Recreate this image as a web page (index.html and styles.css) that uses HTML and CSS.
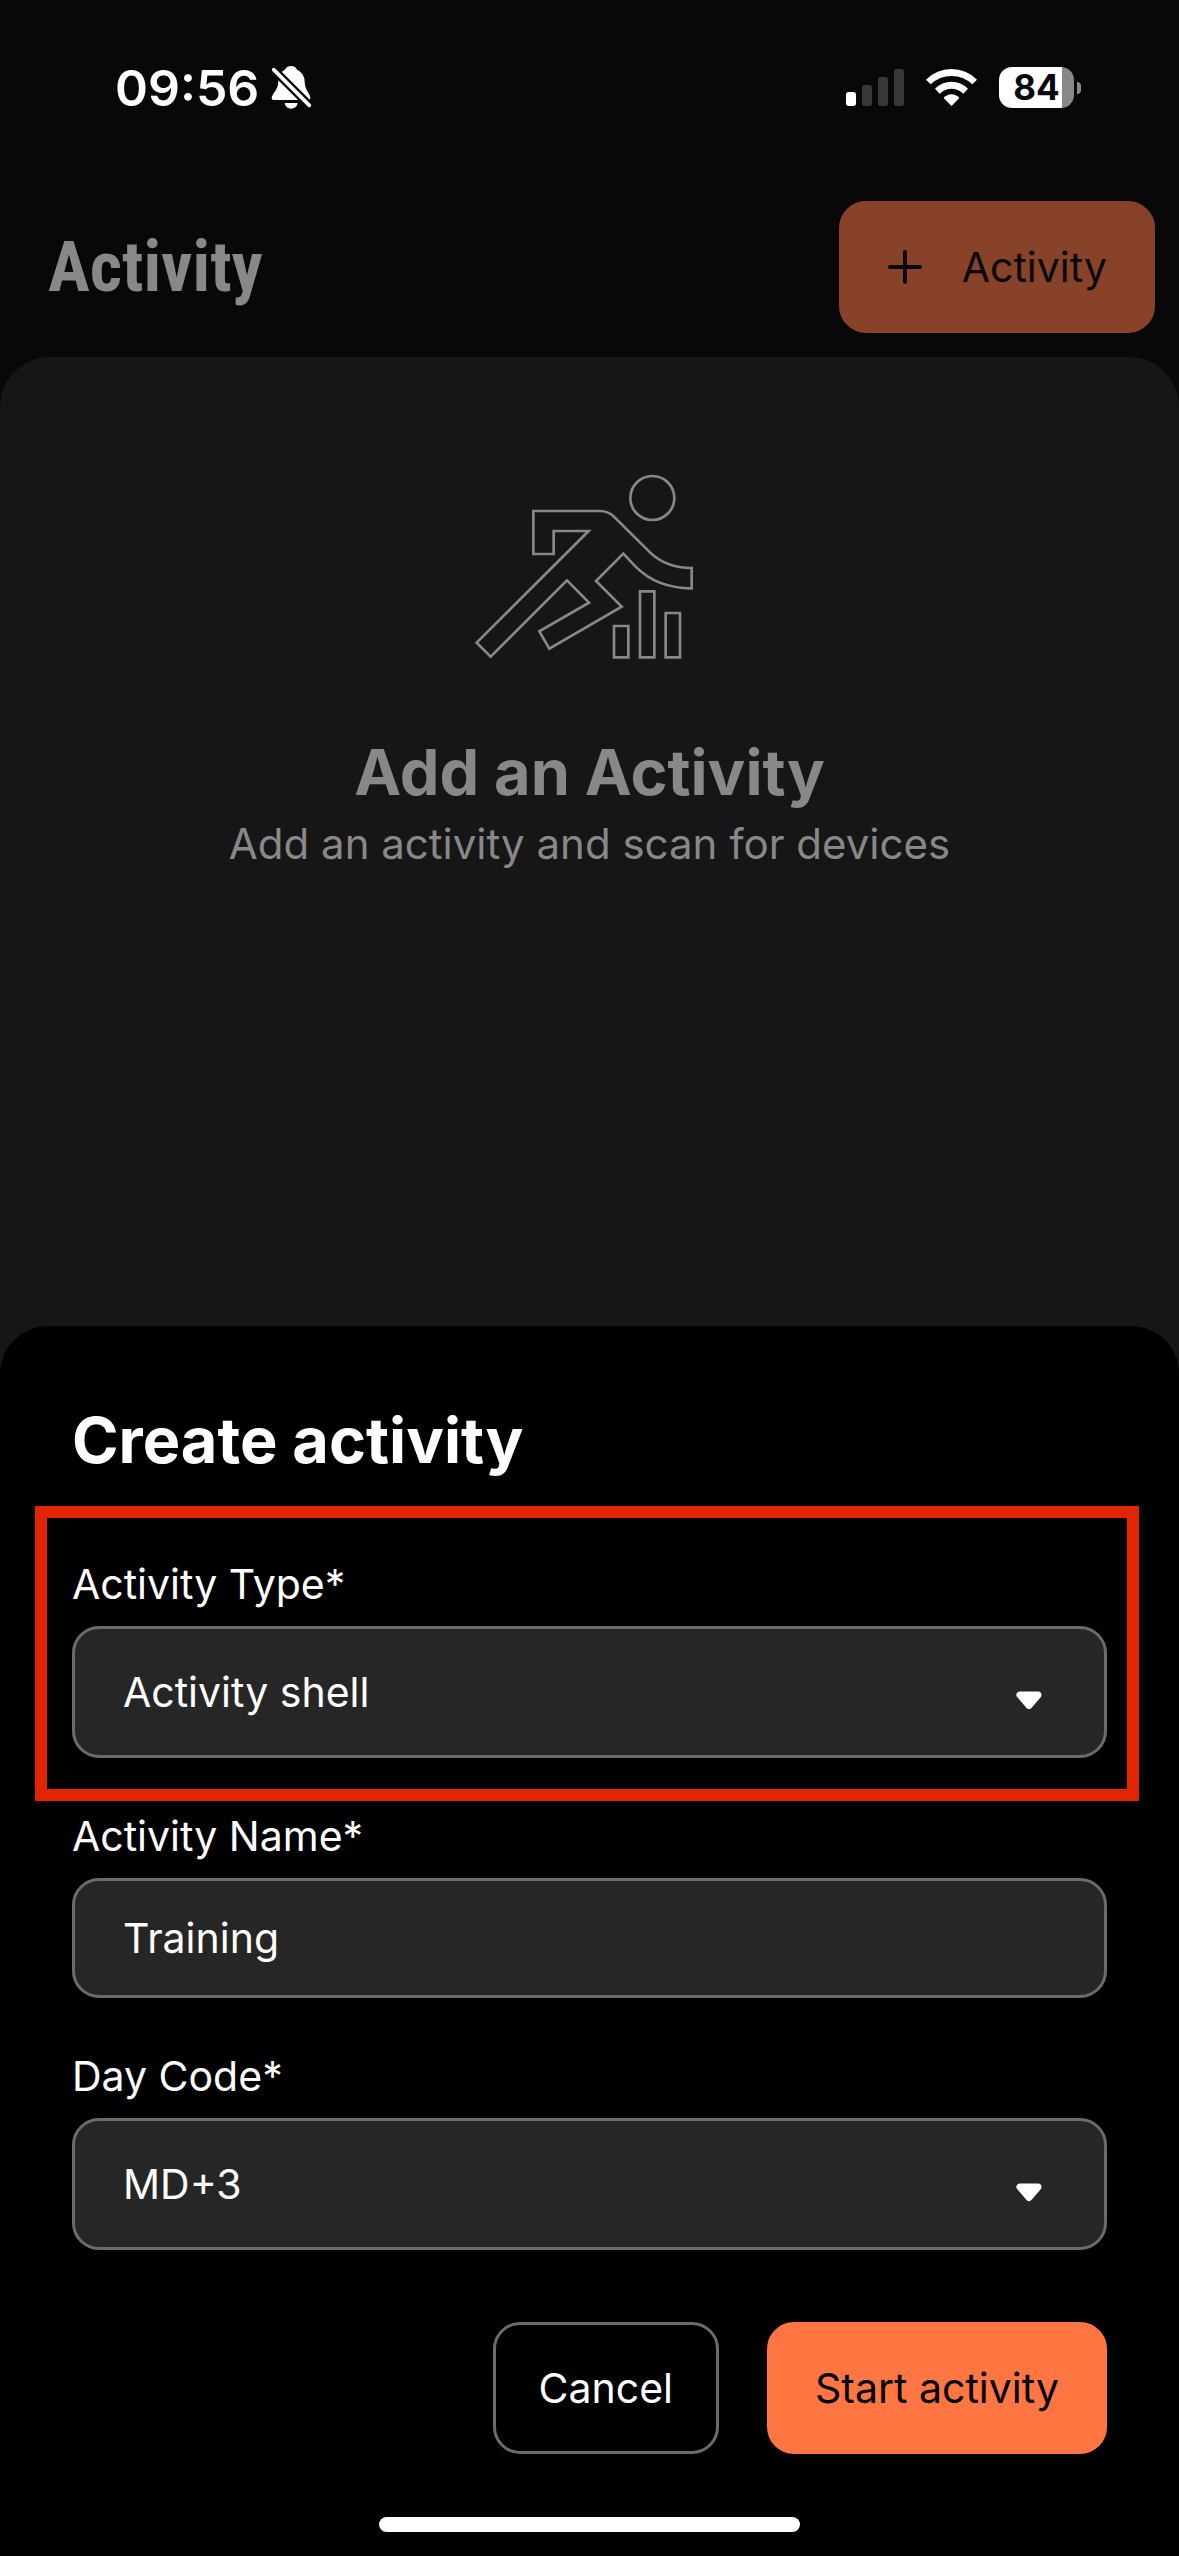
FILE: index.html
```html
<!DOCTYPE html>
<html lang="en">

<head>
    <meta charset="UTF-8" />
    <meta name="viewport" content="width=device-width, initial-scale=1.0" />
    <title>Activity</title>
    <link rel="stylesheet" href="styles.css">
</head>

<body>
    <div class="status-bar">
        <div class="status-left">
            <span class="time">09:56</span>
            <svg class="bell" viewBox="543 78 123 135" aria-hidden="true">
                <path d="M603 81C594 81 587 86 584 93C571 99 565 112 565 128C565 151 546 164 545 176Q545 183 553 183H654Q662 182 661 175C660 164 644 152 644 128C644 112 635 99 622 93C619 86 612 81 603 81Z" fill="#fff" />
                <path d="M584 192H623C621 203 613 209 603.500 209C594 209 586 203 584 192Z" fill="#fff" />
                <path d="M540 81L670 211" stroke="#080808" stroke-width="25" />
                <path d="M551 92L658 199" stroke="#fff" stroke-width="11" stroke-linecap="round" />
            </svg>
        </div>
        <div class="status-right">
            <svg class="signal" viewBox="78 87 174 111" aria-hidden="true">
                <rect x="78" y="156" width="30" height="42" rx="8" fill="#fff" />
                <rect x="126" y="135" width="30" height="63" rx="8" fill="#393939" />
                <rect x="174" y="111" width="30" height="87" rx="8" fill="#393939" />
                <rect x="222" y="87" width="30" height="111" rx="8" fill="#393939" />
            </svg>
            <svg class="wifi" viewBox="318 87 153 111" aria-hidden="true">
                <path d="M318 119Q350 87 394.500 87T471 119L457 133Q430 108 394.500 108T332 133Z" fill="#fff" />
                <path d="M345 146Q366 125 394.500 125T444 146L430 161Q414 146 394.500 146T359 161Z" fill="#fff" />
                <path d="M371 174Q381 163 394.500 163T418 174L394.500 198Z" fill="#fff" />
            </svg>
            <div class="battery">
                <span class="battery-level">84</span>
                <span class="battery-tip"></span>
            </div>
        </div>
    </div>

    <div class="header">
        <h1>Activity</h1>
        <button type="button" class="btn btn-add">
            <svg class="plus" viewBox="0 0 36 36" aria-hidden="true">
                <path d="M18 3V33M3 18H33" stroke="#080808" stroke-width="4" stroke-linecap="round" />
            </svg>
            Activity
        </button>
    </div>

    <div class="content">
        <svg class="runner" viewBox="12 0 753 630" fill="none" stroke="#888" stroke-width="8" aria-hidden="true">
            <circle cx="577" cy="114" r="66" />
            <path d="M220 153H420Q446 153 464 172L570 277Q617 323 695 324V385Q590 384 526 319L490 281L408 363L485 440L268 566L238 514L387 428L321 361L92 590L50 548L386 213H281V282H220Z" />
            <path d="M462 498H505V592H462ZM540 394H583V592H540ZM617 459H660V592H617Z" />
        </svg>
        <h2>Add an Activity</h2>
        <p>Add an activity and scan for devices</p>
    </div>

    <form class="sheet" onsubmit="return false">
        <h2>Create activity</h2>

        <div class="field highlight">
            <label for="activityType">Activity Type*</label>
            <div class="select-box">
                <select id="activityType">
                    <option>Activity shell</option>
                </select>
                <svg class="arrow" viewBox="0 0 60 60" aria-hidden="true">
                    <path d="M21 33H39L30 43.500Z" fill="#fff" stroke="#fff" stroke-width="7" stroke-linejoin="round" />
                </svg>
            </div>
        </div>

        <div class="field">
            <label for="activityName">Activity Name*</label>
            <input type="text" id="activityName" value="Training" />
        </div>

        <div class="field">
            <label for="dayCode">Day Code*</label>
            <div class="select-box">
                <select id="dayCode">
                    <option>MD+3</option>
                </select>
                <svg class="arrow" viewBox="0 0 60 60" aria-hidden="true">
                    <path d="M21 33H39L30 43.500Z" fill="#fff" stroke="#fff" stroke-width="7" stroke-linejoin="round" />
                </svg>
            </div>
        </div>

        <div class="actions">
            <button type="button" class="btn btn-cancel">Cancel</button>
            <button type="submit" class="btn btn-start">Start activity</button>
        </div>

        <div class="home-indicator"></div>
    </form>
</body>

</html>
```
FILE: styles.css
```css
* {
    box-sizing: border-box;
}

body {
    font-family: Inter, "Liberation Sans", sans-serif;
    font-size: 41px;
    line-height: 48px;
    margin: 0;
    min-height: 100vh;
    display: flex;
    flex-direction: column;
    background-color: #080808;
    color: #fff;
}

h1,
h2,
p {
    margin: 0;
}

/* status bar */
.status-bar {
    display: flex;
    justify-content: space-between;
    align-items: center;
    height: 177px;
    padding: 0 98px 2px 115px;
}

.status-left,
.status-right {
    display: flex;
    align-items: center;
}

.status-left {
    gap: 12px;
}

.status-right {
    gap: 22px;
}

.time {
    font-size: 50px;
    font-weight: 600;
}

.bell {
    width: 41px;
    height: 45px;
}

.signal {
    width: 58px;
    height: 37px;
}

.wifi {
    width: 51px;
    height: 37px;
}

.battery {
    display: flex;
    align-items: center;
    gap: 3px;
}

.battery-level {
    width: 75px;
    height: 41px;
    border-radius: 13px;
    background: linear-gradient(to right, #fff 84%, #888 84%);
    color: #080808;
    font-size: 35px;
    font-weight: 700;
    line-height: 41px;
    text-align: center;
}

.battery-tip {
    width: 4px;
    height: 12px;
    border-radius: 0 4px 4px 0;
    background: #888;
}

/* header */
.header {
    display: flex;
    justify-content: space-between;
    align-items: center;
    padding: 24px 24px 24px 48px;
}

.header h1 {
    font-family: "Roboto Condensed", Roboto, sans-serif;
    font-size: 70px;
    font-weight: 700;
    line-height: 72px;
    color: #888;
}

.btn {
    height: 132px;
    padding: 0 45px;
    border: 3px solid transparent;
    border-radius: 27px;
    font: inherit;
    cursor: pointer;
}

.btn-add {
    display: flex;
    align-items: center;
    gap: 39px;
    border-color: #884229;
    background: #884229;
    color: #080808;
}

.plus {
    width: 36px;
    height: 36px;
}

/* empty state */
.content {
    flex: 1;
    display: flex;
    flex-direction: column;
    align-items: center;
    padding-top: 103px;
    border-radius: 50px 50px 0 0;
    background: #161616;
    color: #888;
    text-align: center;
}

.runner {
    width: 251px;
    height: 210px;
}

.content h2,
.sheet h2 {
    font-size: 63px;
    font-weight: 700;
    line-height: 72px;
}

.content h2 {
    margin-top: 66px;
}

.content p {
    margin-top: 12px;
    font-size: 42px;
}

/* bottom sheet */
.sheet {
    position: fixed;
    left: 0;
    right: 0;
    bottom: 0;
    display: flex;
    flex-direction: column;
    gap: 54px;
    padding: 78px 72px 24px;
    border-radius: 48px 48px 0 0;
    background: #000;
}

.sheet h2 {
    margin-bottom: 30px;
}

.field {
    display: flex;
    flex-direction: column;
    gap: 18px;
}

.highlight {
    position: relative;
}

.highlight::after {
    content: "";
    position: absolute;
    inset: -54px -32px -43px -37px;
    border: 12px solid #e32400;
    pointer-events: none;
}

.select-box {
    position: relative;
}

input,
select {
    display: block;
    width: 100%;
    height: 120px;
    padding: 0 48px;
    border: 3px solid #6b6b6b;
    border-radius: 27px;
    background: #262626;
    color: #fff;
    font: inherit;
    appearance: none;
}

select {
    height: 132px;
}

.arrow {
    position: absolute;
    top: 36px;
    right: 48px;
    width: 60px;
    height: 60px;
    pointer-events: none;
}

.actions {
    display: flex;
    justify-content: flex-end;
    gap: 48px;
    margin-top: 18px;
}

.btn-cancel {
    padding: 0 43px;
    border-color: #6b6b6b;
    background: #000;
    color: #fff;
}

.btn-start {
    border-color: #ff7643;
    background: #ff7643;
    color: #000;
}

.home-indicator {
    align-self: center;
    width: 421px;
    height: 15px;
    margin-top: 9px;
    border-radius: 8px;
    background: #fff;
}
```
